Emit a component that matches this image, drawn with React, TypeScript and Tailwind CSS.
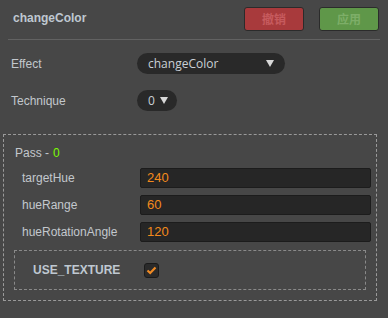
import { useState } from "react";

const params = [
  { name: "targetHue", value: "240" },
  { name: "hueRange", value: "60" },
  { name: "hueRotationAngle", value: "120" },
];

const Caret = () => (
  <svg width="8" height="7" viewBox="0 0 8 7" className="fill-[#d8d8d8]">
    <path d="M0 0 H8 L4 7 Z" />
  </svg>
);

const App = () => {
  const [useTexture, setUseTexture] = useState(true);

  return (
    <div className="w-[388px] h-[318px] bg-[#474747] font-['Liberation_Sans',Arial,sans-serif] text-[12px] text-[#c3c8cd] overflow-hidden">
      <div className="mx-[8px] h-[40px] flex items-center justify-between border-b border-[#626262]">
        <span className="pl-[5px] font-bold text-[12px] text-[#bfc8d1] -mt-[4px]">
          changeColor
        </span>
        <div className="flex gap-[15px] pr-[1px] -mt-[1px]">
          <button className="w-[60px] h-[24px] rounded-[3px] border border-[#2b2b2b] bg-[#a83a3c] text-[#c65a5e] font-bold text-[12px] font-['Noto_Sans_CJK_SC',sans-serif]">
            撤销
          </button>
          <button className="w-[60px] h-[24px] rounded-[3px] border border-[#2b2b2b] bg-[#5f9749] text-[#7dae68] font-bold text-[12px] font-['Noto_Sans_CJK_SC',sans-serif]">
            应用
          </button>
        </div>
      </div>

      <div className="pl-[11px] mt-[13px] flex items-center h-[21px]">
        <span className="w-[126px]">Effect</span>
        <div className="w-[148px] h-[21px] rounded-full bg-[#292929] flex items-center justify-between pl-[11px] pr-[11px] font-['Open_Sans',sans-serif] text-[12px] text-[#c9d0d6]">
          <span>changeColor</span>
          <Caret />
        </div>
      </div>

      <div className="pl-[11px] mt-[16px] flex items-center h-[21px]">
        <span className="w-[126px]">Technique</span>
        <div className="w-[40px] h-[21px] rounded-full bg-[#292929] flex items-center gap-[5px] pl-[11px] font-['Open_Sans',sans-serif] text-[12px] text-[#c9d0d6]">
          <span>0</span>
          <Caret />
        </div>
      </div>

      <div className="ml-[3px] mt-[23px] w-[374px] h-[167px] border border-dashed border-[#9a9a9a] pt-[10px]">
        <div className="pl-[11px] h-[16px] flex items-center">
          Pass - <span className="ml-[4px] text-[#7cfc00]">0</span>
        </div>
        <div className="mt-[7px] flex flex-col gap-[7px]">
          {params.map((p) => (
            <div key={p.name} className="flex items-center h-[20px]">
              <span className="pl-[18px] w-[136px]">{p.name}</span>
              <div className="w-[231px] h-[20px] rounded-[2px] border border-[#1c1c1c] bg-[#262626] flex items-center pl-[6px] text-[#f38a1c] text-[13px]">
                {p.value}
              </div>
            </div>
          ))}
        </div>
        <div className="ml-[10px] mt-[8px] w-[352px] h-[40px] border border-dashed border-[#8a8a8a] flex items-center">
          <span className="pl-[18px] w-[129px] font-bold text-[#bfc8d1]">
            USE_TEXTURE
          </span>
          <button
            onClick={() => setUseTexture(!useTexture)}
            className="w-[15px] h-[15px] rounded-[3px] border border-[#1a1a1a] bg-[#2a2a2a] flex items-center justify-center"
          >
            {useTexture && (
              <svg width="11" height="9" viewBox="0 0 11 9">
                <path
                  d="M1.5 4.5 L4.2 7 L9.5 1.5"
                  fill="none"
                  stroke="#f08a24"
                  strokeWidth="2.2"
                />
              </svg>
            )}
          </button>
        </div>
      </div>
    </div>
  );
};

export default App;
